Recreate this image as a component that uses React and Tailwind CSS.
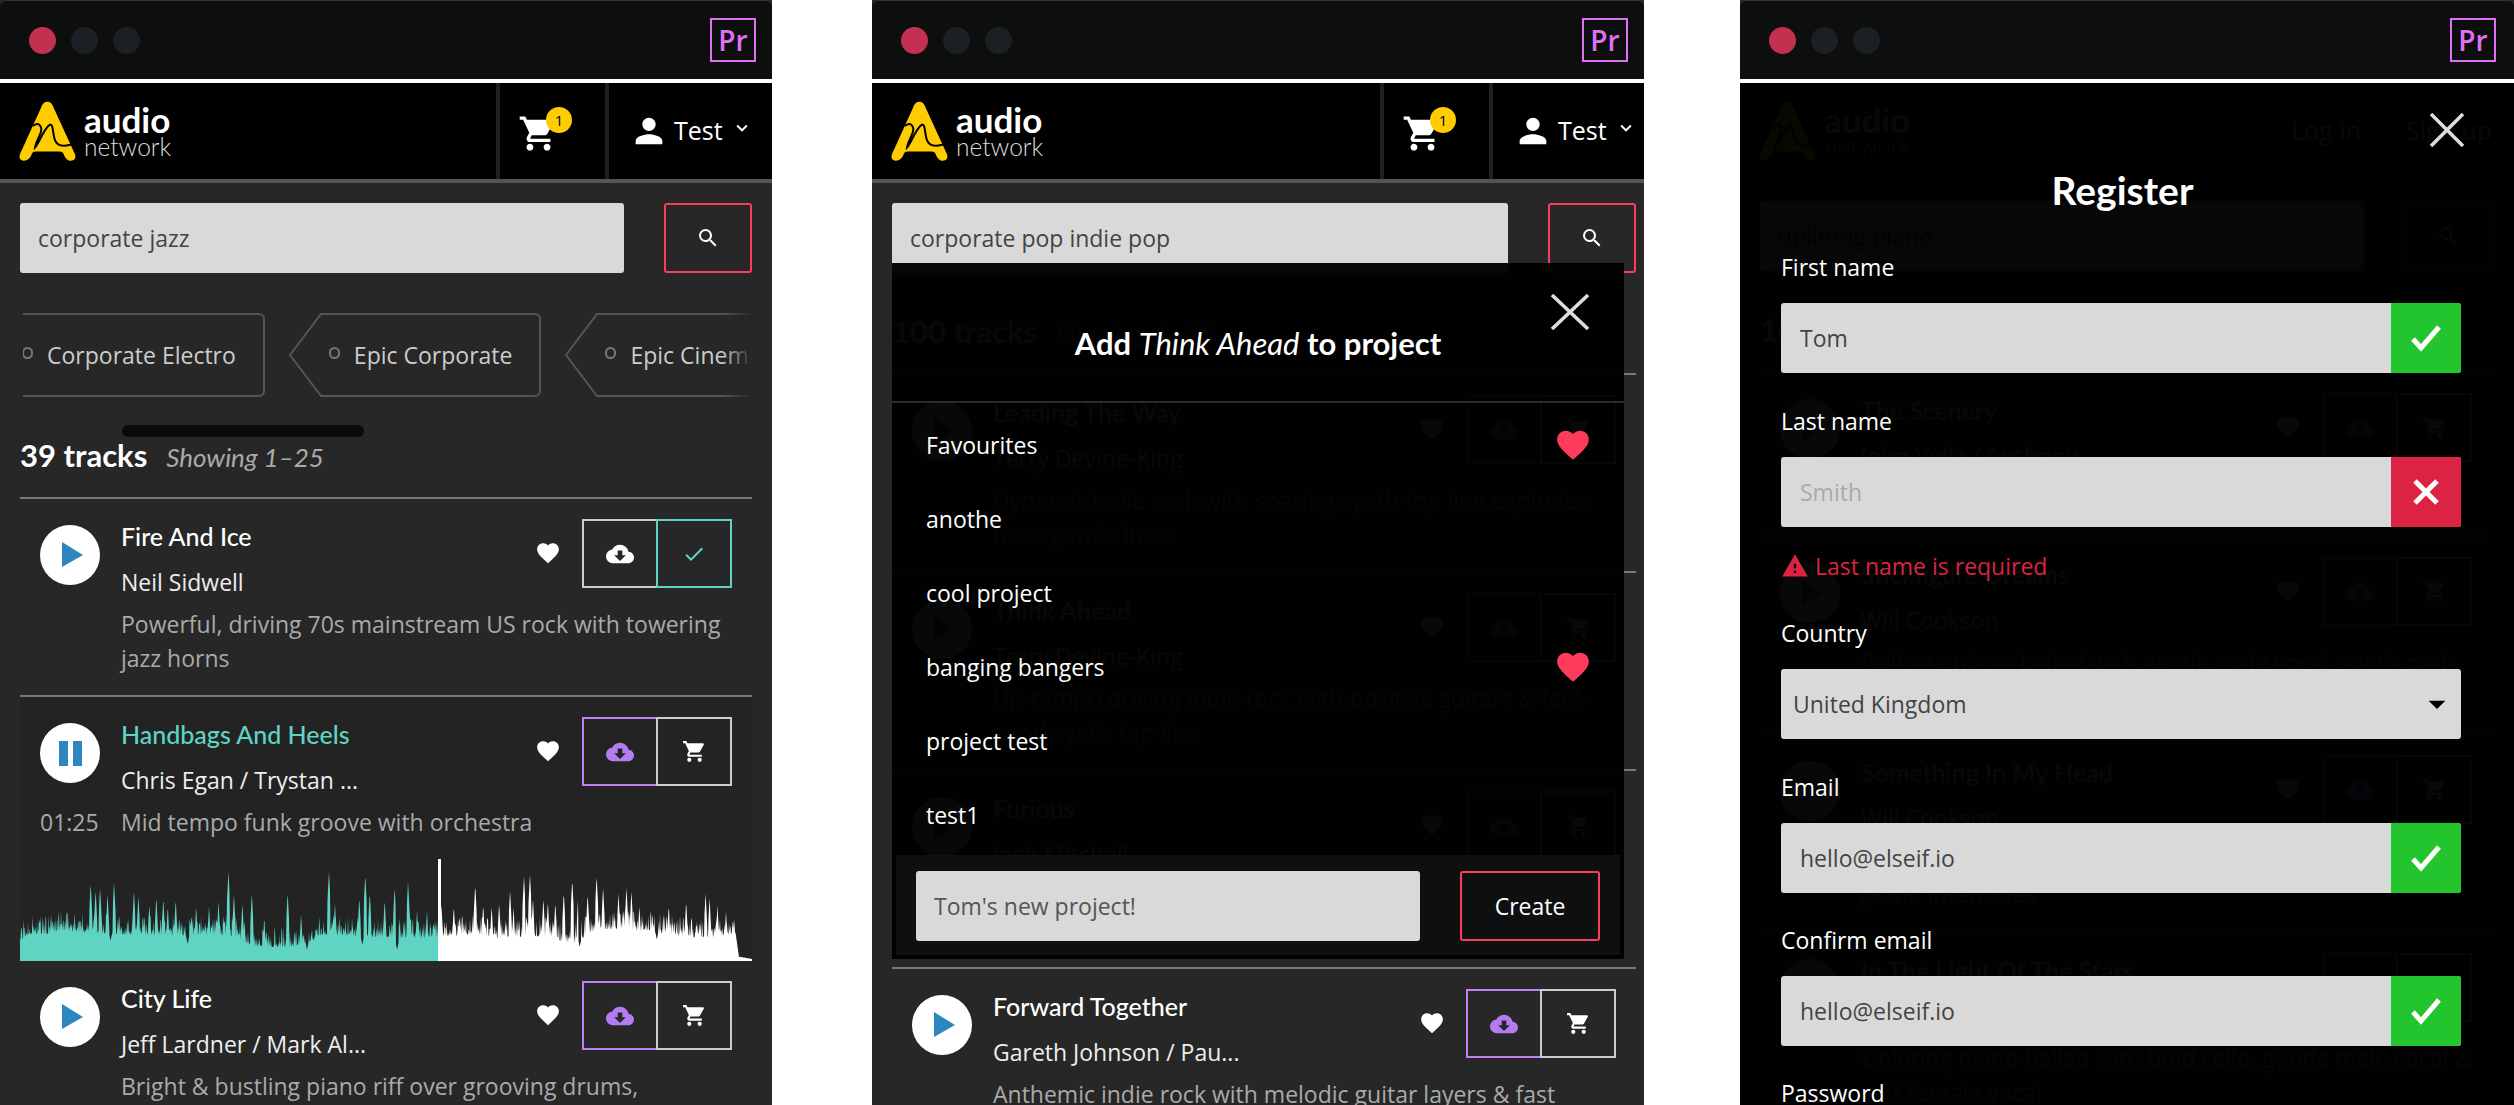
import {
  MdArrowDropDown, MdCheck, MdCloudDownload, MdFavorite, MdKeyboardArrowDown,
  MdPerson, MdSearch, MdShoppingCart, MdWarning,
} from 'react-icons/md'

// points read off the reference, in zoomed crop coordinates
const spikes = [[182,128],[192,148],[201,140],[216,160],[229,125],[269,150],[278,165],[300,190],[314,168],[328,172],[337,195],[353,175],[394,195],[420,195],[439,183],[459,92],[470,160],[487,187],[506,157],[531,228],[578,155],[605,218],[661,92],[673,187],[722,170],[734,102],[743,155],[773,177],[793,140],[800,178],[820,122],[838,210],[858,210],[887,190],[912,195],[955,132],[971,190],[988,195],[1003,187],[1025,150],[1032,200],[1053,108],[1065,102],[1071,175],[1092,173],[1101,183],[1116,185],[1133,155],[1150,117],[1162,165],[1181,160],[1199,107],[1212,140],[1243,160],[1259,142],[1269,152],[1285,195],[1311,215],[1344,192],[1379,182],[1418,158],[1426,172],[1442,195],[1459,212]]
const dips = [[222,303],[377,313],[524,322],[558,320],[617,330],[728,315],[798,330],[1165,322],[1320,300]]
const envelope = [[40,285],[60,262],[100,262],[120,250],[180,258],[240,262],[300,262],[350,268],[440,262],[470,270],[510,298],[600,302],[650,262],[800,272],[880,272],[950,262],[1000,272],[1100,268],[1150,292],[1200,245],[1300,252],[1400,272],[1470,268],[1478,275],[1485,350],[1512,357]]

function envelopeAt(zx) {
  for (let i = 1; i < envelope.length; i++) {
    const [x0, y0] = envelope[i - 1]
    const [x1, y1] = envelope[i]
    if (zx <= x1) return y0 + ((y1 - y0) * (zx - x0)) / (x1 - x0)
  }
  return 357
}

function rand(n) {
  const v = Math.sin(n * 12.9898 + 4.1) * 43758.5453
  return v - Math.floor(v)
}

function waveHeight(px, i) {
  const zx = 40 + px * 2.01
  let top = envelopeAt(zx)
  if (zx < 1478) {
    const r = rand(i)
    top += 22 - Math.pow(r, 2) * 62
  }
  for (const [x, y] of spikes) {
    const d = Math.abs(zx - x)
    if (d < 3) top = Math.min(top, y + d * 30)
  }
  for (const [x, y] of dips) {
    const d = Math.abs(zx - x)
    if (d < 3) top = Math.max(top, y - d * 8)
  }
  return Math.max(0, (363 - top) / 3)
}

function wavePath(from, to) {
  let d = `M${from} 102`
  for (let x = from; x <= to; x += 0.5) d += `L${x} ${(102 - waveHeight(x, x * 2)).toFixed(1)}`
  return d + `L${to} 102Z`
}

function Waveform() {
  return (
    <svg className="block mt-5" width="732" height="102" viewBox="0 0 732 102">
      <path d={wavePath(0, 418)} fill="#5fd4c3" />
      <path d={wavePath(418, 732)} fill="#ffffff" />
      <rect x="418" y="0" width="3" height="102" fill="#ffffff" />
    </svg>
  )
}

function Logo() {
  return (
    <div className="flex items-center pl-[18px] flex-1 gap-[6px]">
      <svg width="60" height="63" viewBox="55 95 180 190">
        <path d="M143 100C152 100 158 106 162 118L226 258C232 272 222 280 210 278C200 276 196 268 192 258C190 252 186 250 180 250L108 250C102 250 98 252 96 258C92 270 84 278 72 278C60 278 56 268 62 255L124 118C128 106 134 100 143 100Z" fill="#ffcc00" />
        <path d="M102 172C118 160 130 176 122 196C116 212 108 224 106 238C120 222 132 182 150 170C162 164 158 196 166 216C172 232 190 236 212 230" fill="none" stroke="#000" strokeWidth="6" strokeLinecap="round" />
      </svg>
      <div className="flex flex-col font-['Lato'] text-white">
        <span className="text-[35px] leading-[32px] font-bold">audio</span>
        <span className="text-[24.5px] leading-[24px] font-light text-[#ddd]">network</span>
      </div>
    </div>
  )
}

function TitleBar({ className }) {
  return (
    <div className={`h-[83px] bg-[#0d0f0f] rounded-t-[6px] border-t border-[#333] border-b-4 border-b-white flex items-center justify-between pl-[29px] ${className}`}>
      <div className="flex gap-[15px]">
        <span className="w-[27px] h-[27px] rounded-full bg-[#c4304f]" />
        <span className="w-[27px] h-[27px] rounded-full bg-[#1c1f23]" />
        <span className="w-[27px] h-[27px] rounded-full bg-[#1c1f23]" />
      </div>
      <div className="w-[46px] h-[44px] border-2 border-[#e070f5] flex items-center justify-center text-[#e070f5] text-[28px] font-semibold leading-none">Pr</div>
    </div>
  )
}

function CloseX({ className, w, h }) {
  return (
    <svg width={w} height={h} viewBox={`0 0 ${w} ${h}`} className={className}>
      <path d={`M1 1L${w - 1} ${h - 1}M${w - 1} 1L1 ${h - 1}`} stroke="#ddd" strokeWidth="3.5" fill="none" />
    </svg>
  )
}

function UserHeader() {
  return (
    <div className="h-[100px] bg-black border-b-4 border-[#555] flex items-stretch">
      <Logo />
      <div className="w-[109px] border-l-4 border-[#1c1f23] relative flex items-center text-white">
        <MdShoppingCart size={41} className="ml-[18px] mt-[4px]" />
        <span className="absolute left-[46px] top-[24px] w-[26px] h-[26px] rounded-full bg-[#ffcc00] text-black text-[15px] leading-[26px] text-center">1</span>
      </div>
      <div className="w-[167px] border-l-4 border-[#1c1f23] flex items-center text-white pl-[20px]">
        <MdPerson size={40} />
        <span className="text-[25px] ml-[5px]">Test</span>
        <MdKeyboardArrowDown size={22} className="ml-[8px] mb-[6px]" />
      </div>
    </div>
  )
}

function GuestHeader() {
  return (
    <div className="h-[100px] bg-black border-b-4 border-[#555] flex items-center text-white text-[25px]">
      <Logo />
      <span className="mr-[45px]">Log in</span>
      <span className="mr-[20px]">Sign up</span>
    </div>
  )
}

function SearchRow({ value, top }) {
  return (
    <div className={`flex gap-10 ${top}`}>
      <input readOnly value={value} className="flex-1 min-w-0 h-[70px] bg-[#d9d9d9] rounded-[3px] pl-[18px] text-[23px] text-[#444] outline-none" />
      <button className="w-[88px] h-[70px] border-2 border-[#ff3b5c] rounded-[3px] flex items-center justify-center text-white">
        <MdSearch size={24} />
      </button>
    </div>
  )
}

function Tag({ label, first }) {
  return (
    <div className={`flex shrink-0 h-[84px] ${first ? 'ml-[-38px]' : ''}`}>
      <svg width="41" height="84" viewBox="0 0 41 84" className="block shrink-0">
        <path d="M41 1L32 1L1 42L32 83L41 83" fill="none" stroke="#555" strokeWidth="2" />
      </svg>
      <div className="border-y-2 border-r-2 border-[#555] rounded-r-[6px] flex items-center pr-[27px] text-[23px] text-[#ccc]">
        <span className="w-[11px] h-[12px] rounded-full border-2 border-[#777] mb-[4px] mr-[14px] -ml-[1px]" />
        {label}
      </div>
    </div>
  )
}

function Tags() {
  return (
    <div className="relative mt-10 overflow-hidden">
      <div className="flex gap-[24px]">
        <Tag first label="Corporate Electro" />
        <Tag label="Epic Corporate" />
        <Tag label="Epic Cinematic" />
      </div>
      <div className="absolute inset-y-0 left-0 w-[3px] bg-[#272727]" />
      <div className="absolute inset-y-0 right-0 w-[30px] bg-gradient-to-l from-[#272727] to-transparent" />
    </div>
  )
}

function Heading({ count, shown }) {
  return (
    <div className="h-[60px] border-b-2 border-[#777] box-content">
      <div className="leading-9 whitespace-nowrap">
        <span className="font-['Lato'] font-bold text-[31px] text-white">{count} tracks</span>
        <span className="font-['Lato'] italic text-[26px] text-[#aaa] ml-[19px]">{shown}</span>
      </div>
    </div>
  )
}

function Track({ title, artist, desc, playing, saved, time, last }) {
  const accent = playing ? 'text-[#5fd4c3]' : 'text-white'
  return (
    <div className={`${last ? '' : 'border-b-2 border-[#777]'} ${playing ? 'bg-[#232323]' : ''} pt-5 ${playing ? '' : 'pb-5'}`}>
      <div className="grid grid-cols-[101px_1fr]">
        <div className="pl-5 pt-[6px]">
          <div className="w-[60px] h-[60px] rounded-full bg-white flex items-center justify-center">
            {playing ? (
              <div className="flex gap-[5px]">
                <span className="w-[9px] h-[25px] bg-[#2e86c1]" />
                <span className="w-[9px] h-[25px] bg-[#2e86c1]" />
              </div>
            ) : (
              <svg width="22" height="26" viewBox="0 0 22 26" className="ml-[5px]"><path d="M0 0L21 13L0 25Z" fill="#2e86c1" /></svg>
            )}
          </div>
        </div>
        <div className="flex justify-between pr-5 h-[88px]">
          <div className="whitespace-nowrap">
            <div className={`font-['Lato'] font-medium text-[25px] leading-[34px] ${accent}`}>{title}</div>
            <div className="text-[23px] leading-[34px] mt-3 text-[#eee]">{artist}</div>
          </div>
          <div className="flex items-start">
            <MdFavorite size={26} className="text-white mt-[21px] mr-[21px]" />
            {saved ? (
              <div className="flex">
                <div className="w-[76px] h-[69px] border-2 border-[#ccc] flex items-center justify-center text-white"><MdCloudDownload size={28} /></div>
                <div className="w-[76px] h-[69px] border-2 border-[#5fd4c3] -ml-[2px] flex items-center justify-center text-[#5fd4c3]"><MdCheck size={24} /></div>
              </div>
            ) : (
              <div className="flex">
                <div className="w-[76px] h-[69px] border-2 border-[#c07ff5] flex items-center justify-center text-[#b57bf0]"><MdCloudDownload size={28} /></div>
                <div className="w-[76px] h-[69px] border-2 border-[#ccc] -ml-[2px] flex items-center justify-center text-white"><MdShoppingCart size={25} /></div>
              </div>
            )}
          </div>
        </div>
        <div className="pl-5 text-[23px] leading-[34px] text-[#aaa]">{time}</div>
        <div className="text-[23px] leading-[34px] text-[#aaa] pr-3">{desc}</div>
      </div>
      {playing && <Waveform />}
    </div>
  )
}

function ModalHeart({ on }) {
  return on ? <MdFavorite size={38} className="text-[#ff3b5c]" /> : null
}

function ProjectModal() {
  const projects = [['Favourites', true], ['anothe'], ['cool project'], ['banging bangers', true], ['project test'], ['test1']]
  return (
    <div className="absolute left-[20px] top-[263px] w-[732px] h-[696px] bg-black/97 flex flex-col">
      <CloseX w={38} h={36} className="absolute right-[35px] top-[31px]" />
      <div className="h-[140px] pt-[60px] border-b-2 border-[#2b2b2b] text-center font-['Lato'] font-bold text-[31px] leading-[40px] text-white">
        Add <span className="italic font-normal">Think Ahead</span> to project
      </div>
      <div className="pt-[5px] flex-1">
        {projects.map(([name, on]) => (
          <div key={name} className="h-[74px] flex items-center justify-between pl-[34px] pr-[32px] text-[23px] text-white">
            {name}
            <ModalHeart on={on} />
          </div>
        ))}
      </div>
      <div className="mx-1 mb-1 h-[100px] bg-[#0d0f10] flex gap-10 px-5 pt-4">
        <input readOnly placeholder="Tom's new project!" className="flex-1 min-w-0 h-[70px] bg-[#d9d9d9] rounded-[3px] pl-[18px] text-[23px] text-[#444] placeholder:text-[#555] outline-none" />
        <button className="w-[140px] h-[70px] border-2 border-[#ff3b5c] rounded-[3px] text-[23px] text-white">Create</button>
      </div>
    </div>
  )
}

function Field({ label, value, placeholder, status, className }) {
  return (
    <div className={className}>
      <label className="block text-[23px] leading-[34px] text-white mb-[19px]">{label}</label>
      <div className="flex h-[70px] rounded-[3px] overflow-hidden bg-[#d9d9d9]">
        <input readOnly value={value} placeholder={placeholder} className="flex-1 min-w-0 pl-[19px] text-[23px] text-[#444] placeholder:text-[#aaa] outline-none" />
        {status === 'ok' && (
          <div className="w-[70px] bg-[#22c52d] flex items-center justify-center">
            <svg width="32" height="28" viewBox="0 0 32 28"><path d="M3 15L11 24L29 3" fill="none" stroke="#fff" strokeWidth="5" /></svg>
          </div>
        )}
        {status === 'bad' && (
          <div className="w-[70px] bg-[#dc2343] flex items-center justify-center">
            <svg width="26" height="26" viewBox="0 0 26 26"><path d="M2 2L24 24M24 2L2 24" fill="none" stroke="#fff" strokeWidth="5" /></svg>
          </div>
        )}
      </div>
    </div>
  )
}

function RegisterOverlay() {
  return (
    <div className="absolute left-0 right-0 top-[83px] bottom-0 bg-black/97">
      <CloseX w={34} h={34} className="absolute left-[690px] top-[30px]" />
      <div className="pt-[82px] text-center font-['Lato'] font-bold text-[39px] leading-[50px] text-white pr-[9px]">Register</div>
      <div className="mt-[35px] pl-[41px] pr-[53px]">
        <Field label="First name" value="Tom" status="ok" className="mb-[31px]" />
        <Field label="Last name" placeholder="Smith" status="bad" />
        <div className="mt-[22px] h-[34px] flex items-center text-[23px] text-[#dc2343]">
          <MdWarning size={28} className="mr-[6px]" />
          Last name is required
        </div>
        <div className="mt-[33px] mb-[31px]">
          <label className="block text-[23px] leading-[34px] text-white mb-[19px]">Country</label>
          <div className="relative">
            <select className="w-full h-[70px] bg-[#d9d9d9] rounded-[3px] pl-[12px] text-[23px] text-[#444] appearance-none outline-none">
              <option>United Kingdom</option>
            </select>
            <MdArrowDropDown size={40} className="absolute right-[4px] top-[15px] text-black" />
          </div>
        </div>
        <Field label="Email" value="hello@elseif.io" status="ok" className="mb-[30px]" />
        <Field label="Confirm email" value="hello@elseif.io" status="ok" className="mb-[30px]" />
        <label className="block text-[23px] leading-[34px] text-white">Password</label>
      </div>
    </div>
  )
}

export default function App() {
  return (
    <div className="w-[2514px] h-[1105px] overflow-hidden bg-white flex font-['Open_Sans',sans-serif]">
      <div className="w-[772px] h-full shrink-0 overflow-hidden bg-[#272727]">
        <TitleBar className="pr-4" />
        <UserHeader />
        <div className="px-5">
          <SearchRow value="corporate jazz" top="pt-5" />
          <Tags />
          <div className="mt-[28px] ml-[102px] w-[242px] h-[12px] rounded-full bg-[#0a0a0a]" />
          <Heading count="39" shown="Showing 1–25" />
          <Track saved title="Fire And Ice" artist="Neil Sidwell" desc="Powerful, driving 70s mainstream US rock with towering jazz horns" />
          <Track playing last title="Handbags And Heels" artist="Chris Egan / Trystan ..." time="01:25" desc="Mid tempo funk groove with orchestra" />
          <Track title="City Life" artist="Jeff Lardner / Mark Al..." desc="Bright & bustling piano riff over grooving drums," />
        </div>
      </div>

      <div className="relative w-[772px] h-full shrink-0 ml-[100px] overflow-hidden bg-[#272727]">
        <TitleBar className="pr-4" />
        <div className="w-[784px]">
          <UserHeader />
          <div className="px-5">
            <SearchRow value="corporate pop indie pop" top="pt-5" />
            <div className="mt-10" />
            <Heading count="100" shown="Showing 1–25" />
            <Track title="Leading The Way" artist="Terry Devine-King" desc="Dynamic indie rock with soaring synth top line explodes from gentle intro" />
            <Track title="Think Ahead" artist="Terry Devine-King" desc="Up-tempo driving indie rock with positive guitars & feel-good synth top line" />
            <Track title="Furious" artist="Josh Mitchell" desc="Hard driving indie rock with big guitars and a pounding beat that never stops" />
            <Track title="Forward Together" artist="Gareth Johnson / Pau..." desc="Anthemic indie rock with melodic guitar layers & fast" />
          </div>
        </div>
        <ProjectModal />
      </div>

      <div className="relative w-[774px] h-full shrink-0 ml-[96px] overflow-hidden bg-[#272727]">
        <TitleBar className="pr-[18px]" />
        <div className="w-[772px]">
          <GuestHeader />
          <div className="px-5">
            <SearchRow value="uplifting piano" top="pt-[18px]" />
            <div className="mt-10" />
            <Heading count="100" shown="Showing 1–25" />
            <Track title="The Scenery" artist="John Vella / Anthony" desc="Warm piano with gentle strings" />
            <Track title="Stickfigure Dreams" artist="Will Cookson" desc="Delicate piano ballad with gentle male vocal, synth pads & soft strings" />
            <Track title="Something In My Head" artist="Will Cookson" desc="Emotional piano ballad with gentle male vocal, strings & piano interludes" />
            <Track title="In The Light Of The Stars" artist="Will Cookson" desc="Uplifting piano ballad with bold cello, gentle male vocal & soft female vocal" />
          </div>
        </div>
        <RegisterOverlay />
      </div>
    </div>
  )
}
